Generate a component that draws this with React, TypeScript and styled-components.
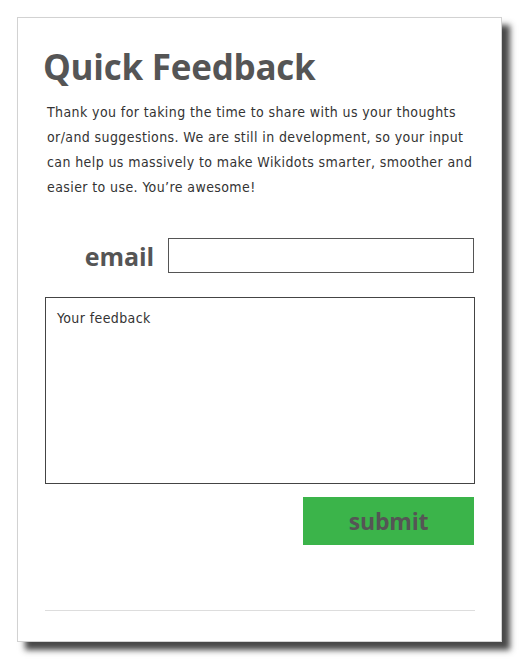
import React from 'react'
import styled, { createGlobalStyle } from 'styled-components'

const GlobalStyle = createGlobalStyle`
  html, body {
    margin: 0;
    padding: 0;
    background: #ffffff;
  }
  body {
    width: 532px;
    height: 672px;
    overflow: hidden;
  }
`

const Page = styled.div`
  padding: 17px 0 0 17px;
`

const Card = styled.div`
  box-sizing: border-box;
  width: 485px;
  height: 625px;
  background: #ffffff;
  border: 1px solid #d2d2d2;
  box-shadow: 8px 8px 6px rgba(40, 40, 40, 0.85);
  padding: 26px 27px 0 27px;
  display: flex;
  flex-direction: column;
`

const Title = styled.h1`
  margin: 0 0 0 -2px;
  font-family: 'Open Sans', sans-serif;
  font-weight: 700;
  font-size: 35px;
  letter-spacing: -0.25px;
  line-height: 46px;
  color: #555555;
`

const Intro = styled.p`
  margin: 10px 0 0 2px;
  font-family: 'DejaVu Sans Condensed', 'DejaVu Sans', sans-serif;
  font-size: 14px;
  letter-spacing: 0.4px;
  line-height: 25px;
  color: #333333;
`

const EmailRow = styled.div`
  display: flex;
  align-items: center;
  justify-content: flex-end;
  gap: 14px;
  margin-top: 38px;
`

const Label = styled.label`
  font-family: 'Open Sans', sans-serif;
  font-weight: 700;
  font-size: 25px;
  letter-spacing: -0.1px;
  color: #555555;
`

const EmailInput = styled.input`
  box-sizing: border-box;
  width: 306px;
  height: 35px;
  border: 1px solid #555555;
  outline: none;
  padding: 0 10px;
  font-family: 'DejaVu Sans Condensed', 'DejaVu Sans', sans-serif;
  font-size: 14px;
`

const Feedback = styled.textarea`
  box-sizing: border-box;
  display: block;
  width: 430px;
  height: 187px;
  margin-top: 24px;
  border: 1px solid #444444;
  outline: none;
  resize: none;
  padding: 10px 11px;
  font-family: 'DejaVu Sans Condensed', 'DejaVu Sans', sans-serif;
  font-size: 14px;
  letter-spacing: 0.4px;
  line-height: 20px;
  color: #333333;
  &::placeholder {
    color: #333333;
    opacity: 1;
  }
`

const Actions = styled.div`
  display: flex;
  justify-content: flex-end;
  margin-top: 13px;
`

const SubmitButton = styled.button`
  width: 171px;
  height: 48px;
  border: none;
  background: #3bb44a;
  font-family: 'Open Sans', sans-serif;
  font-weight: 700;
  font-size: 23px;
  letter-spacing: -0.2px;
  color: #555555;
  cursor: pointer;
`

const Divider = styled.hr`
  width: 430px;
  margin: 65px 0 0 0;
  border: none;
  border-top: 1px solid #dddddd;
`

export default function App() {
  return (
    <Page>
      <GlobalStyle />
      <Card>
        <Title>Quick Feedback</Title>
        <Intro>
          Thank you for taking the time to share with us your thoughts or/and suggestions. We are
          still in development, so your input can help us massively to make Wikidots smarter,
          smoother and easier to use. You’re awesome!
        </Intro>
        <EmailRow>
          <Label htmlFor="email">email</Label>
          <EmailInput id="email" type="email" />
        </EmailRow>
        <Feedback placeholder="Your feedback" />
        <Actions>
          <SubmitButton>submit</SubmitButton>
        </Actions>
        <Divider />
      </Card>
    </Page>
  )
}
